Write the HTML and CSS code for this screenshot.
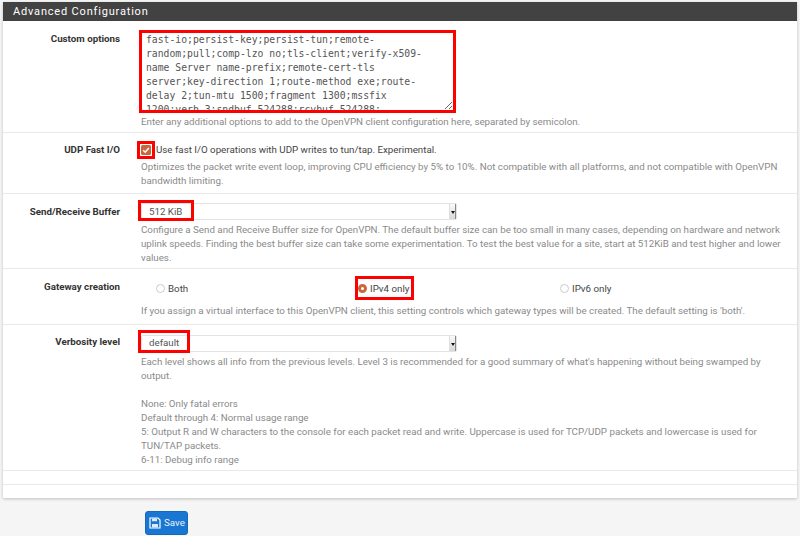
FILE: index.html
```html
<!DOCTYPE html>
<html lang="en">
<head>
<meta charset="utf-8">
<title>Advanced Configuration</title>
<link rel="stylesheet" href="styles.css">
</head>
<body>
<section class="panel">
  <h2 class="panel-title">Advanced Configuration</h2>
  <div class="row row-custom">
    <div class="label">Custom options</div>
    <div class="field">
      <textarea class="options" readonly>fast-io;persist-key;persist-tun;remote-random;pull;comp-lzo no;tls-client;verify-x509-name Server name-prefix;remote-cert-tls server;key-direction 1;route-method exe;route-delay 2;tun-mtu 1500;fragment 1300;mssfix 1200;verb 3;sndbuf 524288;rcvbuf 524288;</textarea>
      <p class="help help-custom">Enter any additional options to add to the OpenVPN client configuration here, separated by semicolon.</p>
    </div>
  </div>
  <div class="row row-udp">
    <div class="label">UDP Fast I/O</div>
    <div class="field">
      <div class="check-line">
        <span class="check-mark"><svg viewBox="0 0 10 10" width="10" height="10"><rect width="10" height="10" rx="1.5" fill="#c9673c"/><path d="M2.2 5.2 4.2 7.2 7.9 3" fill="none" stroke="#fff" stroke-width="1.5"/></svg></span>
        <span class="check-text">Use fast I/O operations with UDP writes to tun/tap. Experimental.</span>
      </div>
      <p class="help">Optimizes the packet write event loop, improving CPU efficiency by 5% to 10%. Not compatible with all platforms, and not compatible with OpenVPN bandwidth limiting.</p>
    </div>
  </div>
  <div class="row row-buffer">
    <div class="label">Send/Receive Buffer</div>
    <div class="field">
      <div class="select"><span class="select-value">512 KiB</span><span class="red-box box-buffer"></span><span class="spinner"></span></div>
      <p class="help">Configure a Send and Receive Buffer size for OpenVPN. The default buffer size can be too small in many cases, depending on hardware and network uplink speeds. Finding the best buffer size can take some experimentation. To test the best value for a site, start at 512KiB and test higher and lower values.</p>
    </div>
  </div>
  <div class="row row-gateway">
    <div class="label">Gateway creation</div>
    <div class="field">
      <div class="radios">
        <div class="radio-cell"><span class="radio"></span><span>Both</span></div>
        <div class="radio-cell"><span class="radio radio-checked"></span><span>IPv4 only</span><span class="red-box box-ipv4"></span></div>
        <div class="radio-cell"><span class="radio"></span><span>IPv6 only</span></div>
      </div>
      <p class="help">If you assign a virtual interface to this OpenVPN client, this setting controls which gateway types will be created. The default setting is 'both'.</p>
    </div>
  </div>
  <div class="row row-verb">
    <div class="label">Verbosity level</div>
    <div class="field">
      <div class="select"><span class="select-value value-verb">default</span><span class="red-box box-verb"></span><span class="spinner"></span></div>
      <p class="help">Each level shows all info from the previous levels. Level 3 is recommended for a good summary of what's happening without being swamped by output.</p>
      <p class="help help-gap">None: Only fatal errors<br>Default through 4: Normal usage range<br>5: Output R and W characters to the console for each packet read and write. Uppercase is used for TCP/UDP packets and lowercase is used for TUN/TAP packets.<br>6-11: Debug info range</p>
    </div>
  </div>
  <div class="row-empty"></div>
  <div class="row-empty row-last"></div>
</section>
<div class="actions">
  <button class="save" type="button">
    <svg viewBox="0 0 12 12" width="12" height="12"><path d="M1 1h8l2 2v8H1z" fill="none" stroke="#fff" stroke-width="1.2"/><path d="M3 1.2h5v3H3zM3 7h6v3.6H3z" fill="#dbe9f8"/></svg>
    <span>Save</span>
  </button>
</div>
</body>
</html>
```
FILE: styles.css
```css
* { box-sizing: border-box; }
html, body { margin: 0; height: 536px; overflow: hidden; }
body {
  background: #f5f5f5;
  font-family: Roboto, "Liberation Sans", sans-serif;
  font-size: 9.75px;
  line-height: 14px;
  color: #333;
  padding: 2px 3px 0;
}
.panel {
  background: #fff;
  box-shadow: 0 1px 3px rgba(0, 0, 0, .22);
  height: 496px;
}
.panel-title {
  margin: 0;
  height: 19px;
  background: #424242;
  color: #fff;
  font-size: 11px;
  font-weight: 400;
  letter-spacing: .82px;
  line-height: 20px;
  padding-left: 10px;
}
.row {
  display: grid;
  grid-template-columns: 117px 1fr;
  column-gap: 21px;
  border-bottom: 1px solid #e9e9e9;
}
.row-custom { height: 112px; padding-top: 9px; }
.row-udp { height: 61px; padding-top: 10px; }
.row-buffer { height: 75px; padding-top: 9px; }
.row-gateway { height: 56px; padding-top: 10px; }
.row-verb { height: 146px; padding-top: 10px; }
.row-custom .label, .row-buffer .label { padding-top: 2px; }
.row-gateway .label { padding-top: 1px; }
.row-empty { height: 14px; border-bottom: 1px solid #e9e9e9; }
.row-last { border-bottom: 0; }
.label {
  text-align: right;
  font-weight: 700;
  color: #333;
}
.field { width: 640px; position: relative; }
.options {
  display: block;
  width: 317px;
  height: 83px;
  margin: 0 0 0 -2px;
  border: 3px solid #f00;
  padding: 0 14px 0 4px;
  font-family: "DejaVu Sans Mono", monospace;
  font-size: 9.75px;
  line-height: 14px;
  color: #555;
  background: #fff;
  outline: 0;
  overflow: hidden;
  resize: vertical;
}
.help {
  margin: 3px 0 0;
  color: #8a8a8a;
  line-height: 14px;
}
.help-custom { margin-top: 2px; }
.help-gap { margin-top: 14px; }
.check-line { display: flex; align-items: center; height: 14px; gap: 1px; }
.check-mark {
  display: flex;
  align-items: center;
  justify-content: center;
  width: 18px;
  height: 18px;
  margin-left: -4px;
  border: 3px solid #f00;
  flex: none;
}
.check-text { color: #444; }
.select {
  position: relative;
  width: 316px;
  height: 17px;
  border: 1px solid #e3e3e3;
  border-radius: 2px;
  display: flex;
  align-items: center;
  color: #555;
}
.select-value { padding-left: 7px; }
.value-verb { margin-top: -2px; }
.spinner {
  position: absolute;
  right: 0;
  top: 0;
  bottom: 0;
  width: 7px;
  background: linear-gradient(#fafafa, #d8d8d8);
  border-left: 1px solid #ddd;
  border-right: 1px solid #888;
}
.spinner::after {
  content: "";
  position: absolute;
  left: 1px;
  top: 7px;
  border: 2px solid transparent;
  border-top: 3px solid #111;
  border-bottom: 0;
}
.red-box { position: absolute; border: 3px solid #f00; pointer-events: none; }
.box-buffer { left: -4px; top: -4px; width: 56px; height: 21px; }
.box-verb { left: -4px; top: -6px; width: 52px; height: 23px; }
.radios {
  display: grid;
  grid-template-columns: 202px 202px 1fr;
  height: 22px;
  padding: 3px 0 0 15px;
  margin-bottom: 1px;
}
.radio-cell { position: relative; display: flex; align-items: center; gap: 3px; height: 14px; color: #444; align-self: start; }
.radio {
  width: 9px;
  height: 9px;
  margin-top: -1px;
  border: 1px solid #ccc;
  border-radius: 50%;
  background: #fff;
  flex: none;
}
.radio-checked { border: 3px solid #c9673c; }
.box-ipv4 { left: -3px; top: -6px; width: 59px; height: 24px; }
.actions { padding: 13px 0 0 142px; }
.save {
  display: flex;
  align-items: center;
  gap: 3px;
  width: 43px;
  height: 24px;
  padding: 0 0 0 3px;
  background: #1976d2;
  border: 1px solid #1669ba;
  border-radius: 3px;
  color: #e8f1fb;
  font: 400 9.75px/1 Roboto, "Liberation Sans", sans-serif;
}
```
